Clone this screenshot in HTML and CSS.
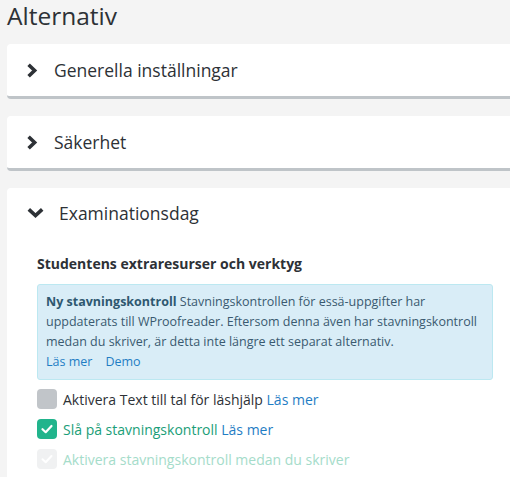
FILE: index.html
```html
<!DOCTYPE html>
<html lang="sv">
<head>
<meta charset="utf-8">
<link rel="stylesheet" href="styles.css">
</head>
<body>
<div class="page">
  <h1 class="title">Alternativ</h1>
  <div class="card">
    <div class="card-head">
      <svg class="chev" width="12" height="15" viewBox="0 0 12 15"><path d="M2.6 1.8 L8.6 7.5 L2.6 13.2" fill="none" stroke="#2d3136" stroke-width="3.6" stroke-linejoin="miter"/></svg>
      <span class="card-title">Generella inställningar</span>
    </div>
  </div>
  <div class="card">
    <div class="card-head">
      <svg class="chev" width="12" height="15" viewBox="0 0 12 15"><path d="M2.6 1.8 L8.6 7.5 L2.6 13.2" fill="none" stroke="#2d3136" stroke-width="3.6" stroke-linejoin="miter"/></svg>
      <span class="card-title">Säkerhet</span>
    </div>
  </div>
  <div class="card card-open">
    <div class="card-head head-open">
      <svg class="chev-down" width="17" height="12" viewBox="0 0 17 12"><path d="M1.8 2.4 L8.5 8.6 L15.2 2.4" fill="none" stroke="#2d3136" stroke-width="3.6" stroke-linejoin="miter"/></svg>
      <span class="card-title">Examinationsdag</span>
    </div>
    <div class="card-body">
      <h3 class="section">Studentens extraresurser och verktyg</h3>
      <div class="info">
        <b>Ny stavningskontroll</b> Stavningskontrollen för essä-uppgifter har uppdaterats till WProofreader. Eftersom denna även har stavningskontroll medan du skriver, är detta inte längre ett separat alternativ.
        <div class="info-links"><a class="link">Läs mer</a><a class="link">Demo</a></div>
      </div>
      <div class="check-row first">
        <span class="box box-off"></span>
        <span class="label">Aktivera Text till tal för läshjälp <a class="link">Läs mer</a></span>
      </div>
      <div class="check-row">
        <span class="box box-on"><svg width="20" height="20" viewBox="0 0 20 20"><path d="M5.5 10.2 L8.7 13.2 L14.5 7" fill="none" stroke="#fff" stroke-width="2.2" stroke-linecap="round" stroke-linejoin="round"/></svg></span>
        <span class="label label-on">Slå på stavningskontroll <a class="link">Läs mer</a></span>
      </div>
      <div class="check-row">
        <span class="box box-dis"><svg width="20" height="20" viewBox="0 0 20 20"><path d="M5.5 10.2 L8.7 13.2 L14.5 7" fill="none" stroke="#fff" stroke-width="2" stroke-linecap="round" stroke-linejoin="round"/></svg></span>
        <span class="label label-dis">Aktivera stavningskontroll medan du skriver</span>
      </div>
    </div>
  </div>
</div>
</body>
</html>
```
FILE: styles.css
```css
html, body {
  margin: 0;
  padding: 0;
  background: #f4f4f4;
  font-family: "Open Sans", "Noto Sans", sans-serif;
  color: #2d3136;
}
.page {
  padding: 0 0 0 7px;
}
.title {
  margin: 0;
  font-size: 24.5px;
  font-weight: 400;
  line-height: 32px;
  height: 44px;
  color: #2d3136;
}
.card {
  background: #fff;
  border-radius: 4px 0 0 4px;
  border-bottom: 3px solid #bfc4c8;
  margin-bottom: 17px;
}
.card-head {
  height: 52px;
  display: flex;
  align-items: center;
  padding-left: 19px;
}
.chev {
  margin-right: 16px;
}
.card-title {
  font-size: 17.5px;
  color: #2d3136;
}
.card-open {
  border-bottom: none;
  border-radius: 4px 0 0 0;
  padding-bottom: 20px;
}
.head-open {
  height: 50px;
  padding-left: 20px;
}
.chev-down {
  margin-right: 15px;
}
.card-body {
  padding: 16px 17px 0 30px;
}
.section {
  margin: 0 0 10px 0;
  font-size: 14px;
  font-weight: 700;
  line-height: 20px;
  color: #2d3136;
}
.info {
  background: #d9edf7;
  border: 1px solid #bce8f1;
  border-radius: 3px;
  padding: 7px 8px 7px 8px;
  font-size: 12.5px;
  line-height: 20px;
  color: #3a5a70;
}
.info b {
  font-weight: 700;
  color: #2e5870;
}
.info-links .link {
  margin-right: 13px;
}
.link {
  color: #1f7dc4;
  text-decoration: none;
}
.check-row {
  display: flex;
  align-items: center;
  gap: 6px;
  margin-top: 10px;
  height: 20px;
}
.check-row.first {
  margin-top: 9px;
}
.box {
  width: 20px;
  height: 20px;
  border-radius: 4px;
  flex: none;
  display: block;
}
.box svg { display: block; }
.box-off { background: #c1c5c9; }
.box-on { background: #21b48c; }
.box-dis { background: #f0f1f2; }
.label {
  font-size: 14px;
  color: #2d3136;
}
.label-on { color: #1a9e78; }
.label-dis { color: #a5dcca; }
```
